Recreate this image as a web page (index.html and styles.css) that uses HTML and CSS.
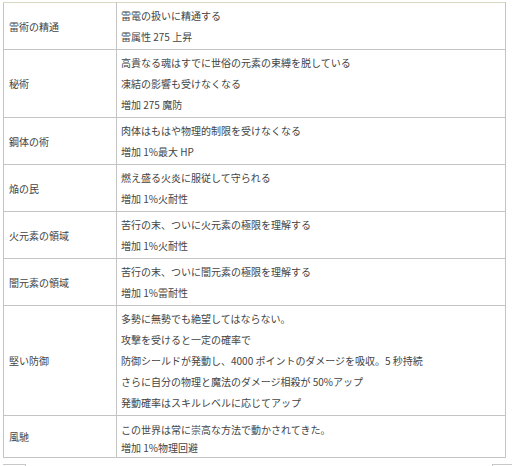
FILE: index.html
```html
<!DOCTYPE html>
<html lang="ja">
<head>
<meta charset="utf-8">
<link rel="stylesheet" href="styles.css">
</head>
<body>
<div class="page">
<table class="skills">
<tbody>
<tr><td class="name">雷術の精通</td><td class="desc"><div>雷電の扱いに精通する</div><div>雷属性 275 上昇</div></td></tr>
<tr><td class="name">秘術</td><td class="desc"><div>高貴なる魂はすでに世俗の元素の束縛を脱している</div><div>凍結の影響も受けなくなる</div><div>増加 275 魔防</div></td></tr>
<tr><td class="name">鋼体の術</td><td class="desc"><div>肉体はもはや物理的制限を受けなくなる</div><div>増加 1%最大 HP</div></td></tr>
<tr><td class="name">焔の民</td><td class="desc"><div>燃え盛る火炎に服従して守られる</div><div>増加 1%火耐性</div></td></tr>
<tr><td class="name">火元素の領域</td><td class="desc"><div>苦行の末、ついに火元素の極限を理解する</div><div>増加 1%火耐性</div></td></tr>
<tr><td class="name">闇元素の領域</td><td class="desc"><div>苦行の末、ついに闇元素の極限を理解する</div><div>増加 1%雷耐性</div></td></tr>
<tr><td class="name">堅い防御</td><td class="desc"><div>多勢に無勢でも絶望してはならない。</div><div>攻撃を受けると一定の確率で</div><div>防御シールドが発動し、4000 ポイントのダメージを吸収。5 秒持続</div><div>さらに自分の物理と魔法のダメージ相殺が 50%アップ</div><div>発動確率はスキルレベルに応じてアップ</div></td></tr>
<tr class="last"><td class="name">風馳</td><td class="desc"><div>この世界は常に崇高な方法で動かされてきた。</div><div>増加 1%物理回避</div></td></tr>
</tbody>
</table>
<div class="below">
<div class="tab-left"></div>
<div class="tab-right"></div>
</div>
</div>
</body>
</html>
```
FILE: styles.css
```css
html, body {
  margin: 0;
  padding: 0;
  background: #ffffff;
}
body {
  font-family: "Noto Sans CJK JP", "Noto Sans", sans-serif;
  font-size: 10px;
  color: #444444;
}
.page {
  padding: 2px 0 0 3px;
}
.skills {
  border-collapse: collapse;
  width: 503px;
  table-layout: fixed;
}
.skills td {
  border: 1px solid #c4c4c4;
  line-height: 21px;
  padding: 2px 4px;
}
.skills tr:first-child td {
  border-top-color: #d9d6c2;
}
.skills .name {
  width: 103px;
  vertical-align: middle;
  padding-left: 5px;
}
.skills .desc {
  vertical-align: top;
}
.skills .last td {
  line-height: 18px;
}
.skills .last .desc {
  padding-top: 5px;
  padding-bottom: 0;
}
.below {
  display: flex;
  justify-content: space-between;
  margin-top: 6px;
  height: 6px;
}
.tab-left {
  width: 22px;
  border-top: 1px solid #c8c8c8;
  border-right: 1px solid #c8c8c8;
}
.tab-right {
  width: 19px;
  border-top: 1px solid #c8c8c8;
  border-left: 1px solid #c8c8c8;
}
```
